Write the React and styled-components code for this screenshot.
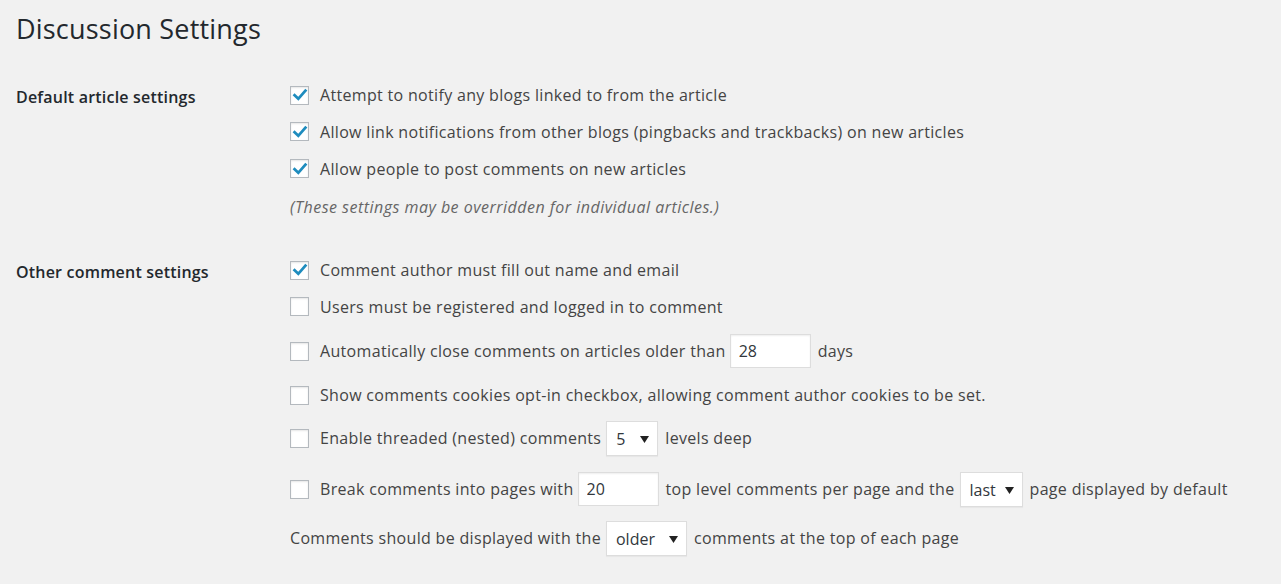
import styled, { createGlobalStyle } from 'styled-components'

const GlobalStyle = createGlobalStyle`
  html, body {
    margin: 0;
    padding: 0;
    background: #f1f1f1;
  }
  body {
    font-family: "Open Sans", Lato, sans-serif;
    color: #444;
  }
`

function Check({ checked }) {
    return (
        <Box>
            {checked && (
                <svg width="16" height="16" viewBox="0 0 16 16">
                    <path d="M2.6 8.2 L6.3 11.8 L13.4 3.6" fill="none" stroke="#1e8cbe" strokeWidth="2.8" strokeLinecap="square" />
                </svg>
            )}
        </Box>
    )
}

function Dropdown({ value, width }) {
    return (
        <Select $w={width}>
            <span>{value}</span>
            <svg width="9" height="7" viewBox="0 0 9 7">
                <path d="M0 0 H9 L4.5 7 Z" fill="#222" />
            </svg>
        </Select>
    )
}

export default function App() {
    return (
        <Page>
            <GlobalStyle />
            <Title>Discussion Settings</Title>

            <Section $top={23}>
                <Label>Default article settings</Label>
                <Fields>
                    <Row $h={36}><Check checked /><Text>Attempt to notify any blogs linked to from the article</Text></Row>
                    <Row $h={37}><Check checked /><Text>Allow link notifications from other blogs (pingbacks and trackbacks) on new articles</Text></Row>
                    <Row $h={37}><Check checked /><Text>Allow people to post comments on new articles</Text></Row>
                    <Row $h={40}><Note>(These settings may be overridden for individual articles.)</Note></Row>
                </Fields>
            </Section>

            <Section $top={25}>
                <Label>Other comment settings</Label>
                <Fields>
                    <Row $h={36}><Check checked /><Text>Comment author must fill out name and email</Text></Row>
                    <Row $h={37}><Check /><Text>Users must be registered and logged in to comment</Text></Row>
                    <Row $h={52}>
                        <Check />
                        <Text>Automatically close comments on articles older than</Text>
                        <Input readOnly defaultValue="28" />
                        <Text>days</Text>
                    </Row>
                    <Row $h={36}><Check /><Text>Show comments cookies opt-in checkbox, allowing comment author cookies to be set.</Text></Row>
                    <Row $h={50}>
                        <Check />
                        <Text>Enable threaded (nested) comments</Text>
                        <Dropdown value="5" width={52} />
                        <Text>levels deep</Text>
                    </Row>
                    <Row $h={52}>
                        <Check />
                        <Text>Break comments into pages with</Text>
                        <Input readOnly defaultValue="20" />
                        <Text>top level comments per page and the</Text>
                        <Dropdown value="last" width={63} />
                        <Text>page displayed by default</Text>
                    </Row>
                    <Row $h={46}>
                        <Text>Comments should be displayed with the</Text>
                        <Dropdown value="older" width={81} />
                        <Text>comments at the top of each page</Text>
                    </Row>
                </Fields>
            </Section>
        </Page>
    )
}

const Page = styled.main`
    padding: 0 16px;
    font-size: 16px;
`
const Title = styled.h1`
    margin: 0;
    padding-top: 11px;
    height: 43px;
    font-size: 27px;
    font-weight: 400;
    line-height: 36px;
    letter-spacing: 0.2px;
    color: #23282d;
`
const Section = styled.section`
    display: grid;
    grid-template-columns: 274px 1fr;
    margin-top: ${(p) => p.$top}px;
`
const Label = styled.div`
    padding-top: 10px;
    font-size: 16px;
    line-height: 20px;
    font-weight: 600;
    letter-spacing: 0.2px;
    color: #23282d;
`
const Fields = styled.div`
    display: flex;
    flex-direction: column;
`
const Row = styled.div`
    display: flex;
    align-items: center;
    height: ${(p) => p.$h}px;
    white-space: nowrap;
`
const Box = styled.span`
    display: inline-flex;
    align-items: center;
    justify-content: center;
    box-sizing: border-box;
    width: 19px;
    height: 19px;
    margin-right: 11px;
    background: #fff;
    border: 1px solid #b4b9be;
    box-shadow: inset 0 1px 2px rgba(0, 0, 0, 0.1);
`
const Text = styled.span`
    font-size: 16px;
    line-height: 22px;
    letter-spacing: 0.32px;
    color: #444;
`
const Note = styled.span`
    font-size: 16px;
    font-style: italic;
    letter-spacing: 0.48px;
    color: #666;
`
const Input = styled.input`
    box-sizing: border-box;
    width: 81px;
    height: 34px;
    margin: 0 7px 0 4px;
    padding: 0 8px;
    border: 1px solid #ddd;
    background: #fff;
    box-shadow: inset 0 1px 2px rgba(0, 0, 0, 0.07);
    font-family: inherit;
    font-size: 16px;
    color: #32373c;
    outline: none;
`
const Select = styled.span`
    display: inline-flex;
    align-items: center;
    justify-content: space-between;
    box-sizing: border-box;
    width: ${(p) => p.$w}px;
    height: 35px;
    margin: 0 7px 0 5px;
    padding: 2px 8px 0 9px;
    border: 1px solid #ddd;
    background: #fff;
    box-shadow: 0 1px 1px rgba(0, 0, 0, 0.04);
    font-size: 16px;
    color: #32373c;
`
